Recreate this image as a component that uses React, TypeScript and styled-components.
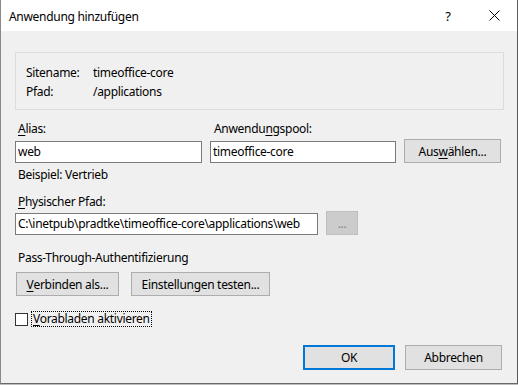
import React from "react";
import styled, { createGlobalStyle } from "styled-components";

const Global = createGlobalStyle`
  html, body { margin: 0; padding: 0; background: #bdbdbd; }
  body { font-family: "Noto Sans", "Segoe UI", sans-serif; font-size: 12px; color: #000; letter-spacing: -0.3px; }
`;

const Window = styled.div`
  width: 518px;
  height: 384px;
  box-sizing: border-box;
  border-left: 1px solid #8a8a8a;
  border-right: 1px solid #5a5a5a;
  border-bottom: 1px solid #6a6a6a;
  display: flex;
  flex-direction: column;
  background: #f0f0f0;
`;

const TitleBar = styled.div`
  height: 31px;
  flex: none;
  background: #fff;
  display: flex;
  align-items: center;
  padding-left: 8px;
`;

const Title = styled.div`
  flex: 1;
  font-size: 12px;
  padding-top: 1px;
`;

const TitleBtn = styled.div`
  width: 46px;
  height: 31px;
  display: flex;
  align-items: center;
  justify-content: center;
  font-size: 13px;
`;

const Body = styled.div`
  flex: 1;
  padding: 21px 0 0 14px;
  display: flex;
  flex-direction: column;
`;

const Group = styled.div`
  width: 489px;
  height: 58px;
  box-sizing: border-box;
  border: 1px solid #dcdcdc;
  padding: 10px 0 0 10px;
  display: grid;
  grid-template-columns: 67px auto;
  grid-auto-rows: 19px;
  align-items: center;
`;

const Label = styled.div<{ $mt?: number; $ml?: number }>`
  line-height: 16px;
  height: 16px;
  margin-top: ${(p) => p.$mt ?? 0}px;
  margin-left: ${(p) => p.$ml ?? 3}px;
  white-space: nowrap;
`;

const Row = styled.div<{ $mt?: number; $gap?: number }>`
  display: flex;
  align-items: flex-start;
  gap: ${(p) => p.$gap ?? 8}px;
  margin-top: ${(p) => p.$mt ?? 0}px;
`;

const Field = styled.div`
  display: flex;
  flex-direction: column;
`;

const TextBox = styled.div<{ $w: number; $mt?: number }>`
  width: ${(p) => p.$w}px;
  height: 22px;
  box-sizing: border-box;
  margin-top: ${(p) => p.$mt ?? 0}px;
  border: 1px solid #7a7a7a;
  background: #fff;
  padding-left: 2px;
  line-height: 20px;
  white-space: nowrap;
  overflow: hidden;
`;

const Button = styled.div<{ $w: number; $h?: number; $mt?: number; $ml?: number; $default?: boolean; $disabled?: boolean }>`
  width: ${(p) => p.$w}px;
  height: ${(p) => p.$h ?? 24}px;
  margin-top: ${(p) => p.$mt ?? 0}px;
  margin-left: ${(p) => p.$ml ?? 0}px;
  box-sizing: border-box;
  border: ${(p) => (p.$default ? "2px solid #0078d7" : p.$disabled ? "1px solid #bfbfbf" : "1px solid #adadad")};
  background: ${(p) => (p.$disabled ? "#cccccc" : "#e1e1e1")};
  color: ${(p) => (p.$disabled ? "#838383" : "#000")};
  display: flex;
  align-items: center;
  justify-content: center;
  white-space: nowrap;
`;

const U = styled.span`
  text-decoration: underline;
  text-underline-offset: 2px;
`;

const CheckRow = styled.div`
  display: flex;
  align-items: center;
  margin-top: 16px;
  height: 14px;
`;

const CheckBox = styled.div`
  width: 13px;
  height: 13px;
  box-sizing: border-box;
  border: 1px solid #333;
  background: #fff;
`;

const CheckLabel = styled.div`
  margin-left: 4px;
  height: 14px;
  line-height: 13px;
  outline: 1px dotted #000;
  padding: 0 1px;
`;

const Footer = styled.div`
  display: flex;
  justify-content: flex-end;
  gap: 10px;
  margin-top: 19px;
  padding-right: 15px;
`;

export default function App() {
  return (
    <>
      <Global />
      <Window>
        <TitleBar>
          <Title>Anwendung hinzufügen</Title>
          <TitleBtn>?</TitleBtn>
          <TitleBtn>
            <svg width="11" height="11" viewBox="0 0 11 11">
              <path d="M0.5 0.5 L10.5 10.5 M10.5 0.5 L0.5 10.5" stroke="#000" strokeWidth="1" fill="none" />
            </svg>
          </TitleBtn>
        </TitleBar>
        <Body>
          <Group>
            <span>Sitename:</span>
            <span>timeoffice-core</span>
            <span>Pfad:</span>
            <span>/applications</span>
          </Group>
          <Row $mt={11}>
            <Field>
              <Label>
                <U>A</U>lias:
              </Label>
              <TextBox $w={187} $mt={4}>web</TextBox>
            </Field>
            <Field>
              <Label $ml={4}>
                Anwendu<U>n</U>gspool:
              </Label>
              <TextBox $w={186} $mt={4}>timeoffice-core</TextBox>
            </Field>
            <Button $w={97} $mt={18}>
              Aus<U>w</U>ählen...
            </Button>
          </Row>
          <Label $mt={4}>Beispiel: Vertrieb</Label>
          <Label $mt={11}>
            <U>P</U>hysischer Pfad:
          </Label>
          <Row $mt={1}>
            <TextBox $w={303} $mt={2}>C:\inetpub\pradtke\timeoffice-core\applications\web</TextBox>
            <Button $w={32} $disabled>
              ...
            </Button>
          </Row>
          <Label $mt={15}>Pass-Through-Authentifizierung</Label>
          <Row $mt={6} $gap={12}>
            <Button $w={103} $ml={1}>
              <U>V</U>erbinden als...
            </Button>
            <Button $w={139}>
              Einstellun<U>g</U>en testen...
            </Button>
          </Row>
          <CheckRow>
            <CheckBox />
            <CheckLabel>
              <U>V</U>orabladen aktivieren
            </CheckLabel>
          </CheckRow>
          <Footer>
            <Button $w={92} $h={25} $default>
              OK
            </Button>
            <Button $w={97} $h={25}>
              Abbrechen
            </Button>
          </Footer>
        </Body>
      </Window>
    </>
  );
}
